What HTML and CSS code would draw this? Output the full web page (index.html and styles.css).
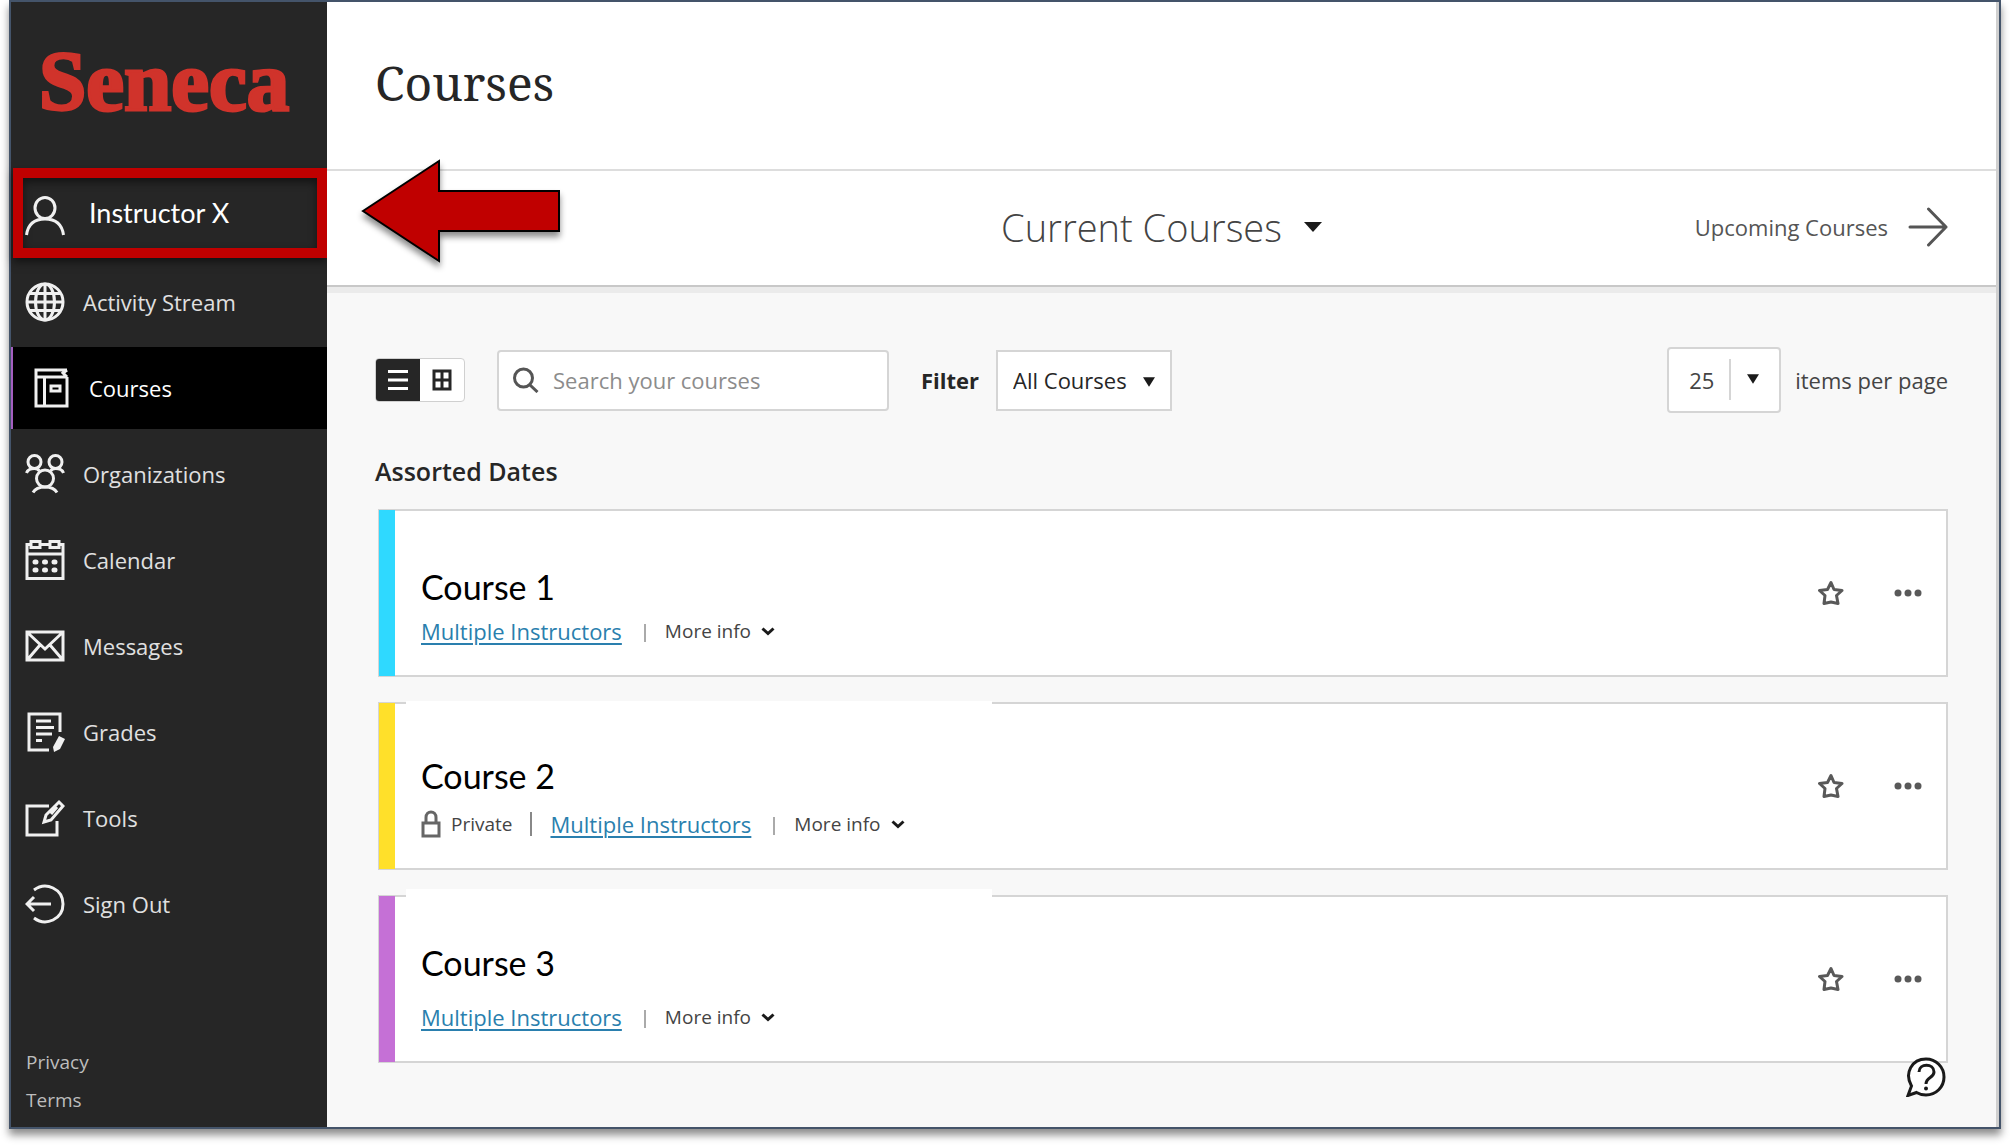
FILE: index.html
```
<!DOCTYPE html>
<html lang="en">
<head>
  <meta charset="UTF-8" />
  <meta name="viewport" content="width=device-width, initial-scale=1" />
  <title>Courses</title>
  <link rel="stylesheet" href="styles.css">
</head>
<body>
  <div class="frame">
    <aside class="sidebar">
      <div class="logo">Seneca</div>

      <nav class="nav">
        <a href="#" class="nav-item profile">
          <svg viewBox="0 0 40 40"><ellipse cx="20" cy="12" rx="10" ry="10.500"/><path d="M1.500 39C3 28 10 23 20 23s17 5 18.500 16"/></svg>
          <span>Instructor X</span>
        </a>
        <a href="#" class="nav-item">
          <svg viewBox="0 0 40 40"><circle cx="20" cy="20" r="18"/><ellipse cx="20" cy="20" rx="9.500" ry="18"/><path d="M20 2v36M2 20h36M5 11.500h30M5 28.500h30"/></svg>
          <span>Activity Stream</span>
        </a>
        <a href="#" class="nav-item active">
          <svg viewBox="0 0 40 40"><path d="M36 2H5v36h31V9M5 9h31M36 2l-4 3 4 4M13.500 9v29"/><rect x="20" y="18" width="9" height="5"/></svg>
          <span>Courses</span>
        </a>
        <a href="#" class="nav-item">
          <svg viewBox="0 0 40 40"><circle cx="9.500" cy="8" r="6.500"/><circle cx="30.500" cy="8" r="6.500"/><circle cx="20" cy="24.500" r="8.500"/><path d="M1.500 19c1-3 4-4.500 8-4.500 2 0 4 1 5 2.500M38.500 19c-1-3-4-4.500-8-4.500-2 0-4 1-5 2.500M8 38.500c2-3.500 6-5.500 12-5.500s10 2 12 5.500"/></svg>
          <span>Organizations</span>
        </a>
        <a href="#" class="nav-item">
          <svg viewBox="0 0 40 40"><path d="M6 4.500H2v34h36v-34h-4M15 4.500h10M2 14h36"/><rect x="6" y="1.500" width="9" height="6"/><rect x="25" y="1.500" width="9" height="6"/><path class="dots" d="M10 22h1M19.500 22h1M29 22h1M10 30h1M19.500 30h1M29 30h1"/></svg>
          <span>Calendar</span>
        </a>
        <a href="#" class="nav-item">
          <svg viewBox="0 0 40 40"><path d="M2 6h36v28H2zM3 7l17 16L37 7M3 33l12-14M37 33L25 19"/></svg>
          <span>Messages</span>
        </a>
        <a href="#" class="nav-item">
          <svg viewBox="0 0 40 40"><path d="M35 20V2H4v36h20M11 9h15M11 15.500h18M11 22h16M11 28.500h6"/><path class="solid" d="M34 24l6 3-5 10-6 3-1-5z"/></svg>
          <span>Grades</span>
        </a>
        <a href="#" class="nav-item">
          <svg viewBox="0 0 40 40"><path d="M24 8H2v29h30V23M34 4l4 4-12 14-7 2 2-7zM32 9l-6 7"/></svg>
          <span>Tools</span>
        </a>
        <a href="#" class="nav-item">
          <svg viewBox="0 0 40 40"><path d="M9 6C21-3 38 5 38 20S21 43 9 34M26 20H2M9 13l-7 7 7 7"/></svg>
          <span>Sign Out</span>
        </a>
      </nav>

      <div class="legal">
        <a href="#">Privacy</a>
        <a href="#">Terms</a>
      </div>
    </aside>

    <main class="main">
      <header class="page-header">
        <h1>Courses</h1>
      </header>

      <div class="term-bar">
        <button class="term-current">Current Courses
          <svg class="caret" viewBox="0 0 18 10"><path d="M0 0h18l-9 10z"/></svg>
        </button>
        <a href="#" class="term-next">Upcoming Courses
          <svg viewBox="0 0 40 40"><path d="M2 20h36M20.500 2L38 20 20.500 38"/></svg>
        </a>
      </div>

      <section class="content">
        <div class="toolbar">
          <div class="view-toggle">
            <button class="selected" aria-label="List view"><svg viewBox="0 0 20 22"><path d="M0 2.500h20M0 11h20M0 19.500h20"/></svg></button>
            <button aria-label="Grid view"><svg viewBox="0 0 20 22"><path d="M2 2h16v18H2zM10 2v18M2 11h16"/></svg></button>
          </div>

          <div class="search">
            <svg viewBox="0 0 26 26"><circle cx="10.500" cy="11" r="9"/><path d="M17 18l7.500 7"/></svg>
            <input type="text" placeholder="Search your courses" aria-label="Search your courses">
          </div>

          <label class="filter-label" for="filter">Filter</label>
          <div class="select-box">
            <select id="filter">
              <option>All Courses</option>
            </select>
            <svg class="caret" viewBox="0 0 18 14"><path d="M0 0h18l-9 14z"/></svg>
          </div>

          <div class="paging">
            <div class="select-box page-size">
              <select id="pageSize">
                <option>25</option>
              </select>
              <svg class="caret" viewBox="0 0 18 14"><path d="M0 0h18l-9 14z"/></svg>
            </div>
            <label for="pageSize">items per page</label>
          </div>
        </div>

        <h2>Assorted Dates</h2>

        <div class="course-list">
          <article class="course blue">
            <div class="course-info">
              <h3>Course 1</h3>
              <div class="meta">
                <a href="#">Multiple Instructors</a>
                <span class="sep"></span>
                <button class="more">More info <svg viewBox="0 0 14 9"><path d="M1.500 1.500L7 6.500l5.500-5"/></svg></button>
              </div>
            </div>
            <button class="icon-btn" aria-label="Add to favourites"><svg viewBox="0 0 26 26"><path d="M13 2.500l3 7 8 1-5.500 5 1.500 8-7-1.500L6 23.500l1-8-5.500-5 8-1z"/></svg></button>
            <button class="icon-btn dots-btn" aria-label="More options"><svg viewBox="0 0 28 26"><circle cx="4" cy="13" r="3.500"/><circle cx="14" cy="13" r="3.500"/><circle cx="24" cy="13" r="3.500"/></svg></button>
          </article>

          <article class="course yellow covered">
            <div class="course-info">
              <h3>Course 2</h3>
              <div class="meta">
                <span class="private"><svg viewBox="0 0 20 28"><path d="M2 13h16v13H2zM5 13V7.500c0-7.500 10-7.500 10 0V13"/></svg> Private</span>
                <span class="sep tall"></span>
                <a href="#">Multiple Instructors</a>
                <span class="sep"></span>
                <button class="more">More info <svg viewBox="0 0 14 9"><path d="M1.500 1.500L7 6.500l5.500-5"/></svg></button>
              </div>
            </div>
            <button class="icon-btn" aria-label="Add to favourites"><svg viewBox="0 0 26 26"><path d="M13 2.500l3 7 8 1-5.500 5 1.500 8-7-1.500L6 23.500l1-8-5.500-5 8-1z"/></svg></button>
            <button class="icon-btn dots-btn" aria-label="More options"><svg viewBox="0 0 28 26"><circle cx="4" cy="13" r="3.500"/><circle cx="14" cy="13" r="3.500"/><circle cx="24" cy="13" r="3.500"/></svg></button>
          </article>

          <article class="course purple covered roomy">
            <div class="course-info">
              <h3>Course 3</h3>
              <div class="meta">
                <a href="#">Multiple Instructors</a>
                <span class="sep"></span>
                <button class="more">More info <svg viewBox="0 0 14 9"><path d="M1.500 1.500L7 6.500l5.500-5"/></svg></button>
              </div>
            </div>
            <button class="icon-btn" aria-label="Add to favourites"><svg viewBox="0 0 26 26"><path d="M13 2.500l3 7 8 1-5.500 5 1.500 8-7-1.500L6 23.500l1-8-5.500-5 8-1z"/></svg></button>
            <button class="icon-btn dots-btn" aria-label="More options"><svg viewBox="0 0 28 26"><circle cx="4" cy="13" r="3.500"/><circle cx="14" cy="13" r="3.500"/><circle cx="24" cy="13" r="3.500"/></svg></button>
          </article>
        </div>
      </section>

      <svg class="pointer" viewBox="0 0 200 104"><path d="M2 52L78 2v30h120v40H78v30z"/></svg>

      <button class="help" aria-label="Help">
        <svg viewBox="0 0 40 40"><path class="bubble" d="M2 38.500l3.500-9.500C-2 16 6 2 20 2c10 0 18 8 18 18s-8 18-18 18c-4 0-7-1-9.500-2.500z"/><path d="M13 15c0-9 15-9 15 0 0 6-8 5-8 12"/><circle class="dot" cx="20" cy="31.500" r="2"/></svg>
      </button>
    </main>
  </div>
</body>
</html>
```
FILE: styles.css
```
* { box-sizing: border-box; }
body {
  margin: 0;
  background: #fff;
  color: #262626;
  font-family: "Open Sans", "Noto Sans", sans-serif;
  font-size: 22px;
  line-height: 28px;
}
h1, h2, h3 {
  margin: 0;
  font-weight: 400;
}
a {
  color: inherit;
  text-decoration: none;
}
button, input, select {
  font: inherit;
  color: inherit;
  border: none;
  background: none;
  padding: 0;
  margin: 0;
  cursor: pointer;
}
svg {
  fill: none;
  stroke: currentColor;
  flex-shrink: 0;
  display: block;
}
.caret {
  fill: #1a1a1a;
  stroke: none;
}
.frame {
  display: flex;
  margin: 0 9px 17px;
  min-height: calc(100vh - 17px);
  border: 2px solid #44546a;
  box-shadow: 0 6px 8px rgba(0, 0, 0, 0.45);
}

/* sidebar */
.sidebar {
  width: 316px;
  flex-shrink: 0;
  display: flex;
  flex-direction: column;
  background: #262626;
  color: #e0e0e0;
}
.logo {
  height: 166px;
  padding: 34px 0 0 28px;
  font-family: "Liberation Serif", serif;
  font-size: 85px;
  font-weight: 700;
  line-height: 90px;
  color: #d0332b;
  -webkit-text-stroke: 3px #d0332b;
}
.nav {
  display: flex;
  flex-direction: column;
  gap: 4px;
}
.nav-item {
  display: flex;
  align-items: center;
  gap: 18px;
  height: 82px;
  padding-left: 14px;
}
.nav-item svg {
  width: 40px;
  height: 40px;
  stroke: #f0f0f0;
  stroke-width: 3;
}
.nav-item .dots {
  stroke-width: 5;
  stroke-linecap: round;
}
.nav-item .solid {
  fill: #f0f0f0;
  stroke: none;
}
.profile {
  height: 90px;
  margin: 0 0 -1px 2px;
  padding-left: 2px;
  gap: 24px;
  border: 10px solid #c00000;
  box-shadow: 0 4px 8px rgba(0, 0, 0, 0.5), inset 0 4px 8px rgba(0, 0, 0, 0.5);
  color: #fff;
  font-family: Lato, sans-serif;
  font-size: 27px;
}
.profile svg {
  margin-top: 6px;
}
.active {
  background: #000;
  color: #fff;
  border-left: 2px solid #a45fc0;
  padding-left: 18px;
}
.legal {
  display: flex;
  flex-direction: column;
  gap: 10px;
  margin-top: auto;
  padding: 0 15px 13px;
  font-size: 19px;
  color: #bdbdbd;
}

/* main column */
.main {
  position: relative;
  flex: 1;
  display: flex;
  flex-direction: column;
  background: #f8f8f8;
  border-right: 3px solid #d0d0d0;
}
.page-header {
  height: 169px;
  padding: 49px 48px 0;
  background: #fff;
  border-bottom: 2px solid #ddd;
}
.page-header h1 {
  font-family: "Noto Serif", "Liberation Serif", serif;
  font-size: 48px;
  line-height: 64px;
}
.term-bar {
  display: grid;
  grid-template-columns: 1fr auto 1fr;
  align-items: center;
  height: 116px;
  padding: 0 48px 2px;
  background: #fff;
  border-bottom: 2px solid #c8c8c8;
  box-shadow: 0 6px 0 #ebebeb;
}
.term-current {
  grid-column: 2;
  display: flex;
  align-items: center;
  gap: 22px;
  font-size: 38px;
  font-weight: 300;
  line-height: 52px;
  color: #444;
}
.term-current .caret {
  width: 18px;
  height: 10px;
}
.term-next {
  justify-self: end;
  display: flex;
  align-items: center;
  gap: 20px;
  color: #555;
}
.term-next svg {
  width: 40px;
  height: 40px;
  stroke-width: 3;
  stroke-linecap: round;
  stroke-linejoin: round;
}
.content {
  padding: 60px 48px 0;
}
.toolbar {
  display: flex;
  align-items: center;
  height: 66px;
}
.view-toggle {
  display: flex;
  height: 44px;
  border: 1px solid #d0d0d0;
  border-radius: 4px;
  background: #fff;
}
.view-toggle button {
  width: 44px;
  display: grid;
  place-items: center;
}
.view-toggle svg {
  width: 20px;
  height: 22px;
  stroke-width: 3;
}
.view-toggle .selected {
  background: #262626;
  color: #fff;
  border-radius: 3px 0 0 3px;
}
.search {
  display: flex;
  align-items: center;
  gap: 14px;
  width: 392px;
  height: 61px;
  margin-left: 32px;
  padding: 0 14px;
  background: #fff;
  border: 2px solid #d5d5d5;
  border-radius: 4px;
}
.search svg {
  width: 26px;
  height: 26px;
  stroke: #555;
  stroke-width: 3;
}
.search input {
  flex: 1;
  min-width: 0;
  outline: none;
}
.search input::placeholder {
  color: #8c8c8c;
  opacity: 1;
}
.filter-label {
  margin: 0 17px 0 32px;
  font-weight: 700;
}
.select-box {
  position: relative;
  background: #fff;
  border: 2px solid #d5d5d5;
}
.select-box select {
  appearance: none;
  display: block;
  width: 172px;
  height: 57px;
  padding-left: 15px;
}
.select-box .caret {
  position: absolute;
  right: 15px;
  top: 25px;
  width: 12px;
  height: 10px;
  pointer-events: none;
}
.paging {
  display: flex;
  align-items: center;
  gap: 14px;
  margin-left: auto;
  color: #444;
}
.page-size {
  border-radius: 4px;
}
.page-size select {
  width: 110px;
  height: 62px;
  padding-left: 20px;
}
.page-size .caret {
  right: 20px;
}
.page-size::after {
  content: "";
  position: absolute;
  left: 60px;
  top: 10px;
  height: 41px;
  border-left: 2px solid #d5d5d5;
}
h2 {
  margin: 42px 0 22px;
  font-size: 25px;
  font-weight: 600;
  line-height: 32px;
}

/* course cards */
.course-list {
  display: flex;
  flex-direction: column;
  gap: 25px;
  margin-left: 3px;
}
.course {
  position: relative;
  display: flex;
  align-items: center;
  min-height: 168px;
  padding-right: 24px;
  background: #fff;
  border: 2px solid #d5d5d5;
}
.course::before {
  content: "";
  align-self: stretch;
  width: 16px;
  margin: -1px 0 -1px -1px;
}
.blue::before { background: #2fd9ff; }
.yellow::before { background: #ffe02a; }
.purple::before { background: #c570d6; }
/* white strip over the top edge of the card */
.covered::after {
  content: "";
  position: absolute;
  left: 26px;
  top: -3px;
  width: 586px;
  height: 6px;
  background: #fff;
}
.roomy::after {
  top: -8px;
  height: 12px;
}
.course-info {
  flex: 1;
  align-self: flex-end;
  padding: 0 26px 28px;
}
.course h3 {
  margin-bottom: 8px;
  font-family: Lato, sans-serif;
  font-size: 34px;
  line-height: 40px;
  color: #000;
}
.covered h3 {
  margin-bottom: 12px;
}
.roomy h3 {
  margin-bottom: 18px;
}
.meta {
  display: flex;
  align-items: center;
  height: 32px;
}
.meta a {
  color: #2a7fae;
  text-decoration: underline;
  text-decoration-thickness: 2px;
  text-underline-offset: 3px;
}
.sep {
  width: 2px;
  height: 18px;
  margin: 4px 19px 0 22px;
  background: #aaa;
}
.sep.tall {
  height: 24px;
  margin: 0 18px;
  background: #888;
}
.more, .private {
  display: flex;
  align-items: center;
  gap: 10px;
  font-size: 19px;
  color: #444;
}
.more svg {
  width: 14px;
  height: 9px;
  stroke: #1a1a1a;
  stroke-width: 3;
}
.private svg {
  width: 20px;
  height: 28px;
  stroke: #666;
  stroke-width: 3;
}
.icon-btn {
  color: #595959;
}
.icon-btn svg {
  width: 26px;
  height: 26px;
  stroke-width: 3;
  stroke-linejoin: round;
}
.icon-btn.dots-btn {
  margin-left: 50px;
}
.dots-btn svg {
  width: 28px;
  fill: currentColor;
  stroke: none;
}

/* overlays */
.pointer {
  position: absolute;
  left: 34px;
  top: 157px;
  width: 200px;
  height: 104px;
  fill: #c00000;
  stroke: #000;
  stroke-width: 2;
  filter: drop-shadow(0 5px 3px rgba(0, 0, 0, 0.45));
}
.help {
  position: absolute;
  right: 50px;
  bottom: 30px;
}
.help svg {
  width: 40px;
  height: 40px;
  stroke: #1a1a1a;
  stroke-width: 3;
}
.help .bubble {
  fill: #fff;
}
.help .dot {
  fill: #1a1a1a;
  stroke: none;
}
```
